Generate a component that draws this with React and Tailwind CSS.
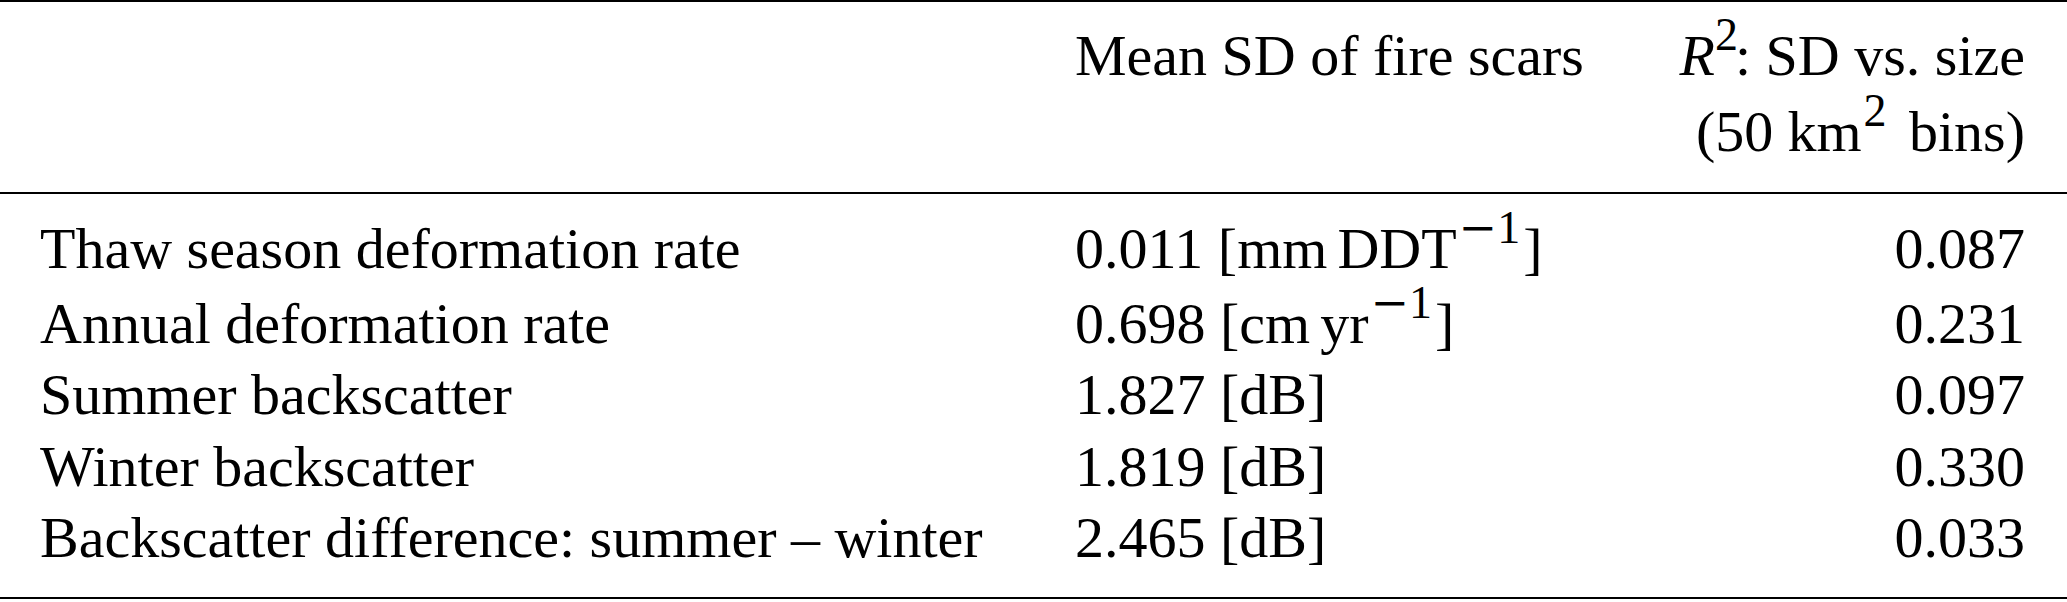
import React from "react";

// booktabs-style table: heavy top/bottom rules, a mid rule under the header,
// three columns (label, mean SD with unit, right-aligned R² value).

function Sup({ children, space = "ml-[2px] mr-[3px]" }) {
  return (
    <sup className={`relative top-[-25px] text-[46px] leading-none ${space}`}>
      {children}
    </sup>
  );
}

// math-style minus, wider than the text font's one
function Minus() {
  return <span style={{ fontFamily: '"DejaVu Serif", serif' }}>−</span>;
}

function Thin({ w = "w-[10px]" }) {
  return <span className={`inline-block ${w}`} />;
}

const rows = [
  {
    label: "Thaw season deformation rate",
    mean: (
      <>
        0.011 [mm
        <Thin />
        DDT
        <Sup>
          <Minus />1
        </Sup>
        ]
      </>
    ),
    r2: "0.087",
  },
  {
    label: "Annual deformation rate",
    mean: (
      <>
        0.698 [cm
        <Thin />
        yr
        <Sup>
          <Minus />1
        </Sup>
        ]
      </>
    ),
    r2: "0.231",
    extra: true,
  },
  { label: "Summer backscatter", mean: "1.827 [dB]", r2: "0.097" },
  { label: "Winter backscatter", mean: "1.819 [dB]", r2: "0.330" },
  {
    label: "Backscatter difference: summer – winter",
    mean: "2.465 [dB]",
    r2: "0.033",
  },
];

export default function App() {
  return (
    <div
      className="h-[602px] w-[2067px] overflow-hidden bg-white text-[58px] text-black"
      style={{ fontFamily: '"Liberation Serif", "Times New Roman", serif' }}
    >
      <div className="h-[2px] bg-black" />

      <div className="grid grid-cols-[1035px_1fr_auto] pb-[22px] pl-[40px] pr-[42px] pt-[16px] leading-[76px]">
        <div />
        <div>Mean SD of fire scars</div>
        <div className="text-right">
          <div>
            <i>R</i>
            <Sup space="mr-[-3px]">2</Sup>: SD vs. size
          </div>
          <div>
            (50
            <Thin w="w-[14px]" />
            km<Sup space="ml-[2px] mr-[8px]">2</Sup> bins)
          </div>
        </div>
      </div>

      <div className="h-[2px] bg-black" />

      <div className="pb-[23px] pl-[40px] pr-[42px] pt-[19px] leading-[71.5px]">
        {rows.map((r) => (
          <div
            key={r.label}
            className={`grid grid-cols-[1035px_1fr_auto] ${r.extra ? "pt-[3px]" : ""}`}
          >
            <div className="whitespace-nowrap">{r.label}</div>
            <div className="whitespace-nowrap">{r.mean}</div>
            <div className="text-right">{r.r2}</div>
          </div>
        ))}
      </div>

      <div className="h-[2px] bg-black" />
    </div>
  );
}
